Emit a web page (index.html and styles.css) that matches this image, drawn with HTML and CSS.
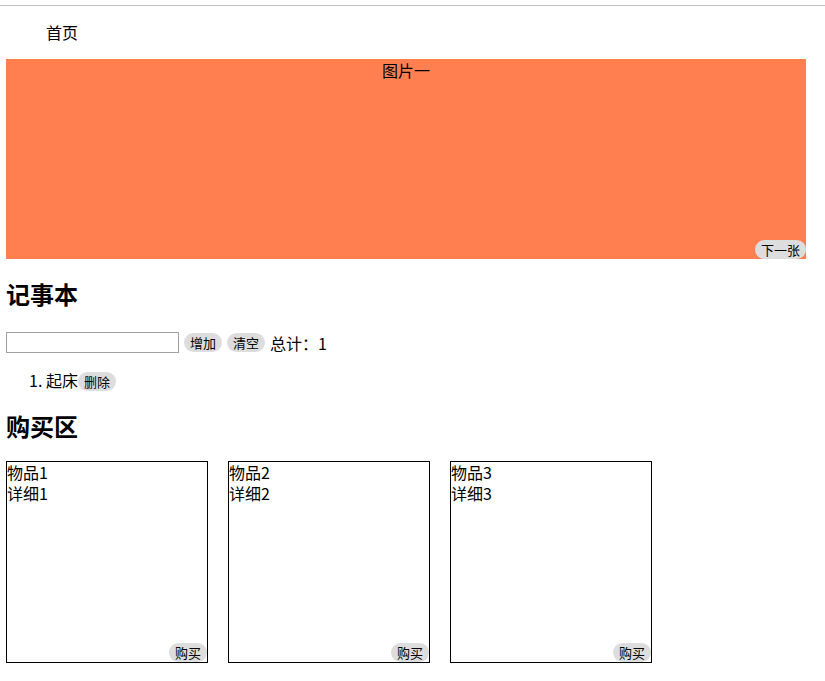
FILE: index.html
```html
<!DOCTYPE html>
<html lang="zh">
<head>
<meta charset="utf-8">
<title>首页</title>
<link rel="stylesheet" href="styles.css">
</head>
<body>
<div class="topline"></div>
<nav class="nav"><span class="nav-item">首页</span></nav>
<main class="main">
  <section class="banner">
    <div class="banner-title">图片一</div>
    <button class="pill banner-next">下一张</button>
  </section>

  <h2 class="title">记事本</h2>
  <div class="todo-row">
    <input class="todo-input" type="text">
    <button class="pill">增加</button>
    <button class="pill">清空</button>
    <span class="total">总计：1</span>
  </div>
  <ol class="todo-list">
    <li>起床<button class="pill">删除</button></li>
  </ol>

  <h2 class="title">购买区</h2>
  <div class="goods">
    <div class="good">
      <div class="good-name">物品1</div>
      <div class="good-desc">详细1</div>
      <button class="pill good-buy">购买</button>
    </div>
    <div class="good">
      <div class="good-name">物品2</div>
      <div class="good-desc">详细2</div>
      <button class="pill good-buy">购买</button>
    </div>
    <div class="good">
      <div class="good-name">物品3</div>
      <div class="good-desc">详细3</div>
      <button class="pill good-buy">购买</button>
    </div>
  </div>
</main>
</body>
</html>
```

FILE: styles.css
```css
html, body {
  margin: 0;
  padding: 0;
  background: #fff;
}
body {
  font-family: "Noto Sans CJK SC", "Noto Sans", "Liberation Sans", sans-serif;
  font-size: 16px;
  color: #000;
}
.topline {
  height: 5px;
  border-bottom: 1px solid #c0c0c0;
}
.nav {
  box-sizing: border-box;
  height: 53px;
  display: flex;
  align-items: center;
  padding-left: 46px;
  padding-bottom: 2px;
}
.nav-item {
  line-height: 22px;
}
.main {
  padding-left: 6px;
  width: 800px;
}
.banner {
  position: relative;
  width: 800px;
  height: 200px;
  background: #ff7f50;
  text-align: center;
}
.banner-title {
  line-height: 22px;
}
.pill {
  font-family: "Noto Sans CJK SC", "Noto Sans", "Liberation Sans", sans-serif;
  font-size: 13px;
  line-height: 19px;
  height: 19px;
  padding: 0 6px;
  border: none;
  border-radius: 10px;
  background: #dddddd;
  color: #000;
  cursor: pointer;
}
.banner-next {
  position: absolute;
  right: 0;
  bottom: 0;
}
.title {
  margin: 19px 0 0;
  font-size: 24px;
  line-height: 32px;
  font-weight: bold;
}
.todo-row {
  margin-top: 21px;
  height: 23px;
  display: flex;
  align-items: center;
  gap: 5px;
}
.todo-input {
  box-sizing: border-box;
  width: 173px;
  height: 21px;
  border: 1px solid #a0a0a0;
  margin: 0;
  padding: 0 2px;
}
.total {
  line-height: 22px;
}
.todo-list {
  margin: 15px 0 0;
  padding-left: 40px;
}
.todo-list li {
  line-height: 22px;
}
.goods {
  margin-top: 19px;
  display: flex;
  gap: 20px;
}
.good {
  position: relative;
  width: 200px;
  height: 200px;
  border: 1px solid #000;
  line-height: 21px;
}
.good-buy {
  position: absolute;
  right: 0;
  bottom: 0;
}
```
